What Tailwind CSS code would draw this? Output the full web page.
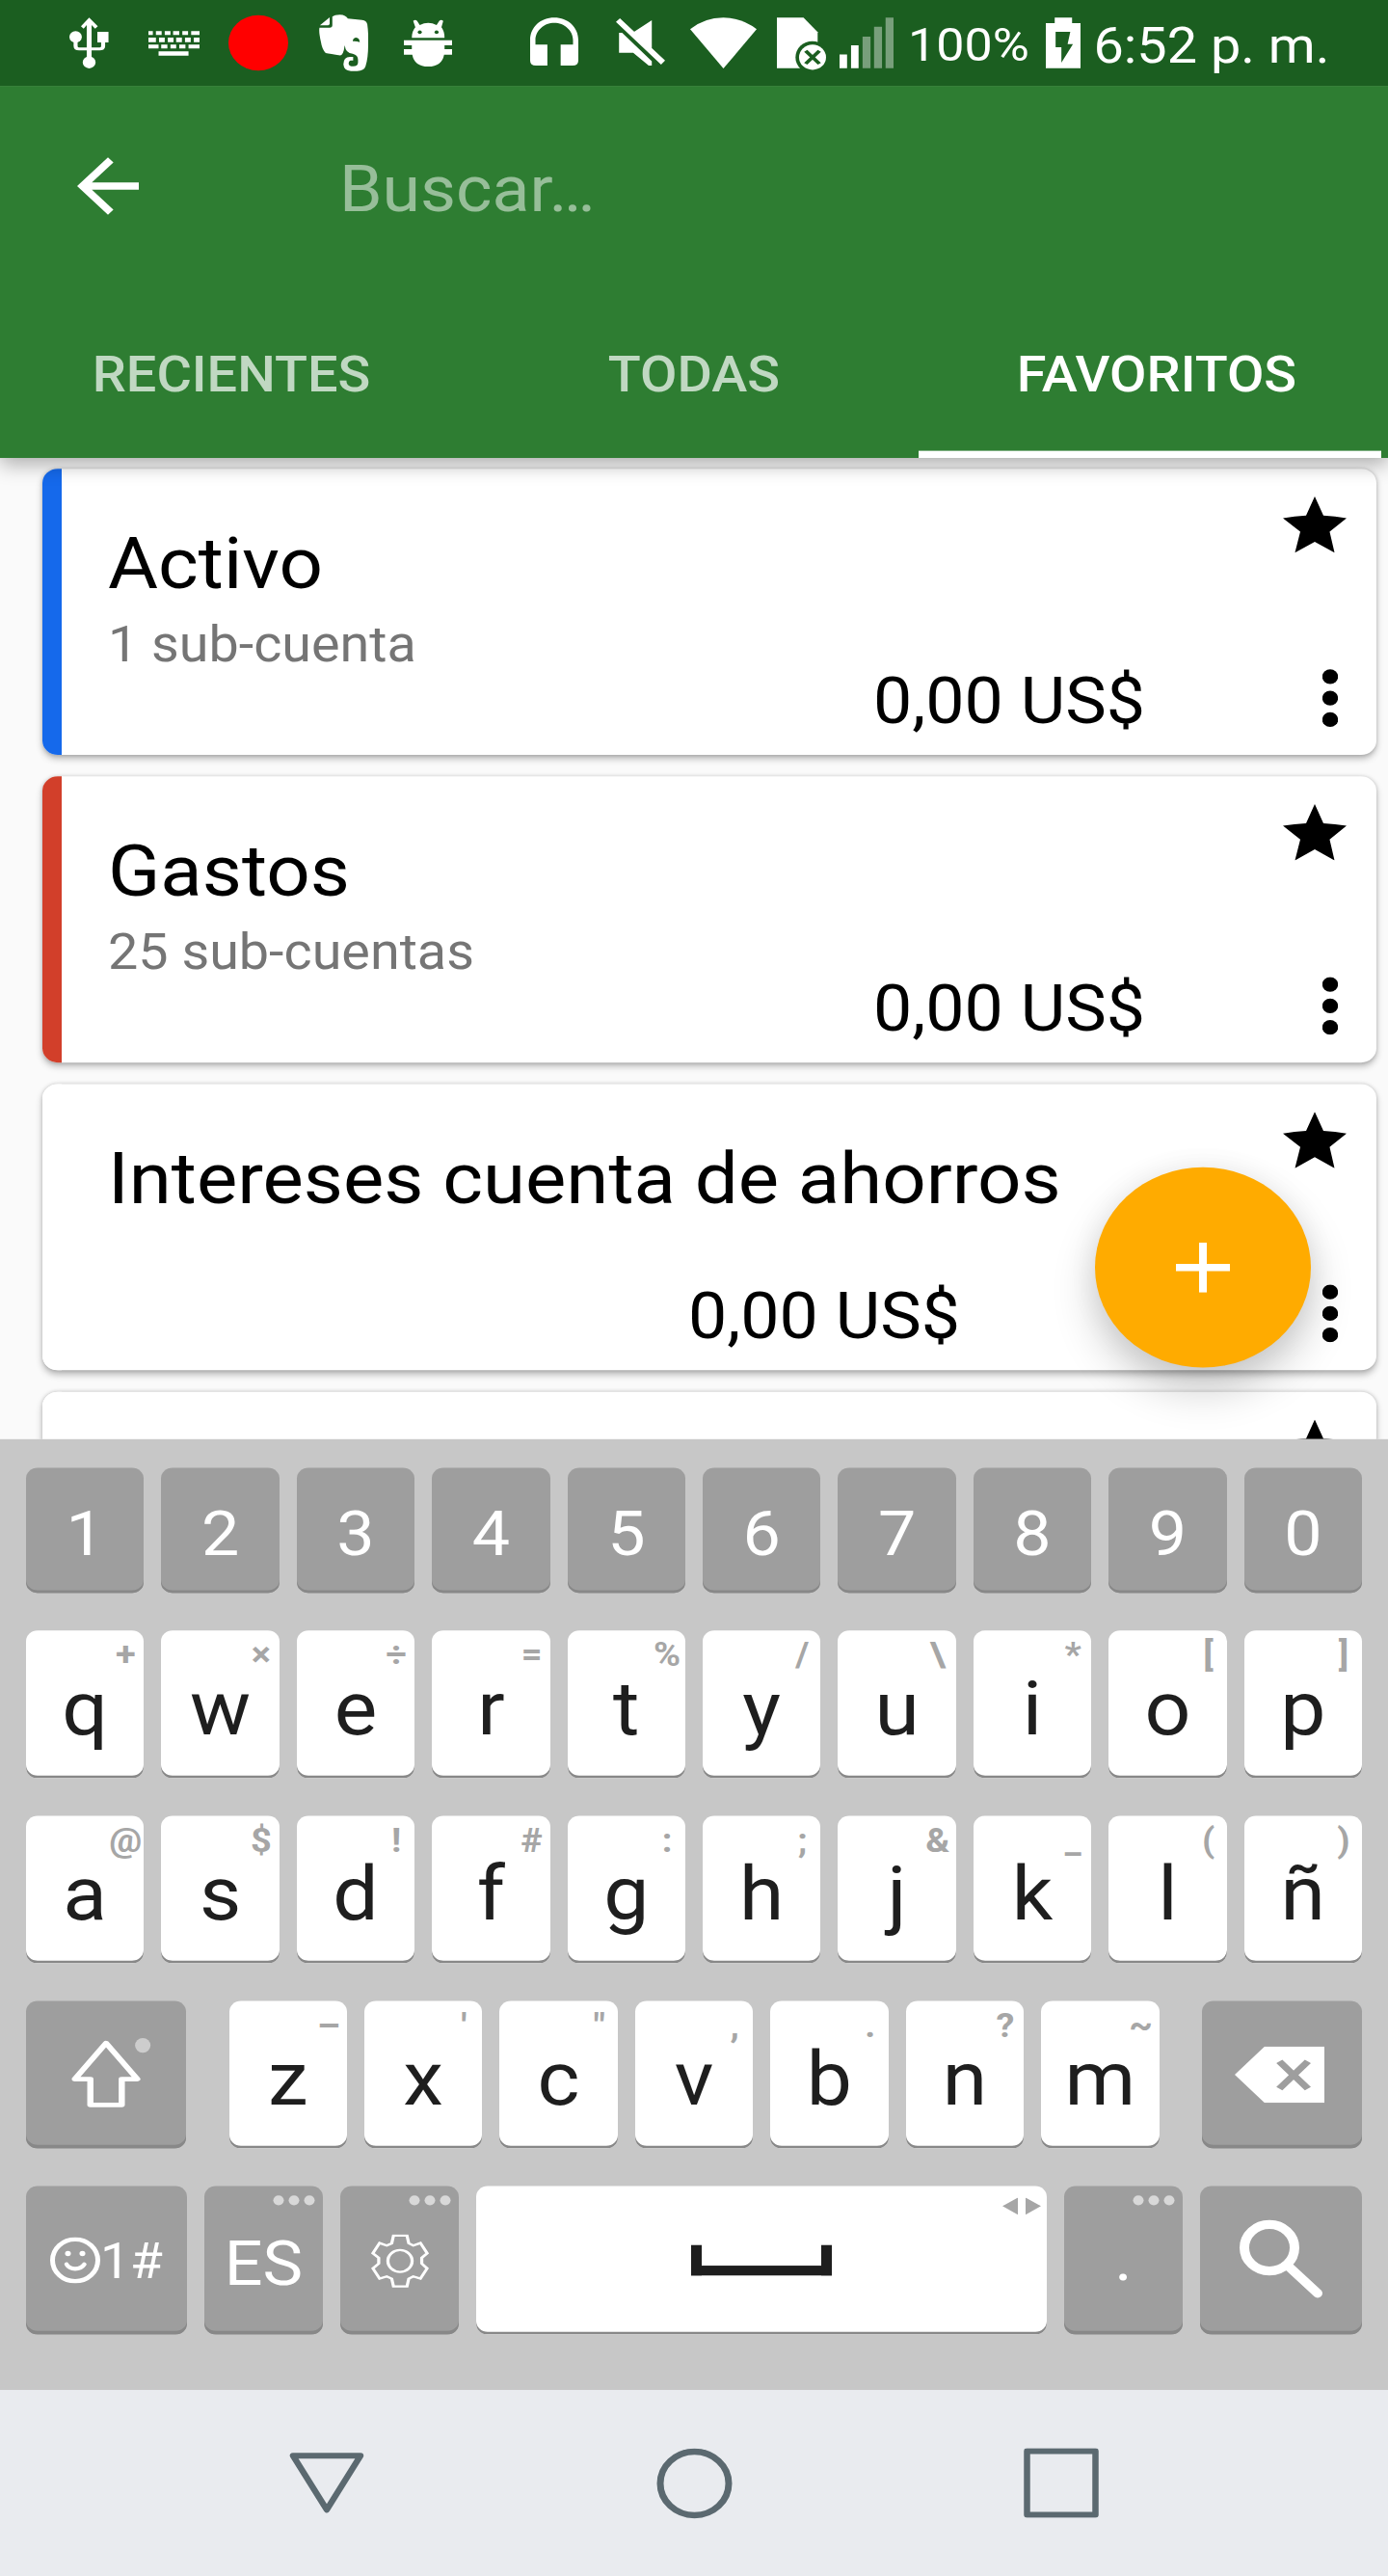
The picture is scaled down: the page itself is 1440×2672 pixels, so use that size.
<!DOCTYPE html>
<html lang="es">
<head>
<meta charset="utf-8">
<title>Cuentas favoritas</title>
<script src="https://cdn.jsdelivr.net/npm/@tailwindcss/browser@4"></script>
</head>
<body class="bg-[#fafafa]">
<div class="h-[2672px] w-[1440px] overflow-hidden">
<div class="relative flex h-[2880px] w-[1440px] origin-top scale-y-[0.92778] flex-col overflow-hidden bg-[#fafafa] font-['Roboto',sans-serif]">

  <!-- Status bar -->
  <div class="relative z-20 flex h-24 shrink-0 bg-[#1b5e20] text-white">
    <svg class="ml-[72px] h-24 w-[41px]" viewBox="157 0 89 267" preserveAspectRatio="none" fill="#fff">
      <ellipse cx="171" cy="115" rx="14" ry="18"/><rect x="220" y="99" width="25" height="33"/>
      <path d="M201.500 55L221 82L215 89L207 78V180H196V78L189 89L183 82Z"/>
      <path d="M171 125V143Q171 152 179 152H225Q233 152 233 143V125" fill="none" stroke="#fff" stroke-width="9"/>
      <ellipse cx="201.500" cy="194" rx="14.500" ry="18.500"/>
    </svg>
    <svg class="ml-[40.5px] h-24 w-[53px]" viewBox="334 0 116 267" preserveAspectRatio="none" fill="#fff">
      <path d="M334 97h10v12h-10zM351 97h13v12h-13zM371 97h13v12h-13zM390 97h14v12h-14zM411 97h13v12h-13zM431 97h19v12h-19zM334 117h17v14h-17zM358 117h13v14h-13zM378 117h13v14h-13zM397 117h13v14h-13zM417 117h13v14h-13zM437 117h13v14h-13zM334 139h23v12h-23zM363 139h14v12h-14zM384 139h13v12h-13zM404 139h14v12h-14zM425 139h25v12h-25zM357 160h68v13h-68z"/>
    </svg>
    <div class="mt-[17px] ml-[30.5px] size-[62px] rounded-full bg-[#ff0000]"></div>
    <svg class="ml-[31.5px] h-24 w-[51px]" viewBox="720 0 111 267" preserveAspectRatio="none" fill="#fff">
      <path d="M722 79L744 54V73Q744 79 738 79Z"/>
      <path fill-rule="evenodd" d="M750 52Q755 46 767 46Q781 47 785 58L817 62Q828 64 829 76Q832 105 831 140Q831 180 825 206Q822 220 806 221H792Q776 219 775 200Q775 178 790 177H797V188H791Q786 190 787 199Q788 206 797 206Q808 206 808 194V186Q808 171 796 167Q780 166 778 141Q775 172 768 172Q745 168 735 165Q727 155 724 129Q719 98 721 86H744Q750 86 750 79ZM796 128Q797 117 804 117Q811 118 812 131Q804 127 796 128Z"/>
    </svg>
    <svg class="ml-[37px] h-24 w-[50px]" viewBox="912 0 109 267" preserveAspectRatio="none" fill="#fff">
      <path d="M933 65Q938 59 942 65L948 78Q967 64 986 78L992 65Q996 59 1001 65L997 85Q1004 97 1004 118H930Q930 97 938 85Z"/>
      <ellipse cx="948" cy="100" rx="4.500" ry="5.500" fill="#1b5e20"/><ellipse cx="986" cy="100" rx="4.500" ry="5.500" fill="#1b5e20"/>
      <path d="M912 125H1021V141H1004V153H1021V170H1003Q998 207 967 207Q936 207 931 170H912V153H930V141H912Z"/>
    </svg>
    <svg class="ml-[81px] h-24 w-[50px]" viewBox="1198 0 109 267" preserveAspectRatio="none" fill="#fff">
      <path d="M1198 125C1198 84 1222 55 1252.500 55S1307 84 1307 125V188Q1307 204 1294 204H1267V139H1295V125C1295 94 1275 71 1252.500 71S1210 94 1210 125V139H1237V204H1211Q1198 204 1198 188Z"/>
    </svg>
    <svg class="ml-[39.5px] h-24 w-[51px]" viewBox="1393 0 111 267" preserveAspectRatio="none" fill="#fff">
      <path d="M1402 57L1504 188L1495 201L1393 68ZM1474 63V151L1434 99ZM1400 102H1407L1474 190V204H1467L1432 164H1400Z"/>
    </svg>
    <svg class="ml-[26px] h-24 w-[69px]" viewBox="-7.500 0 150 267" preserveAspectRatio="none" fill="#fff">
      <path d="M67.500 213L-7.500 91Q25 55 67.500 55T142.500 91Z"/>
    </svg>
    <svg class="ml-[20.5px] h-24 w-[51px]" viewBox="187 0 111 267" preserveAspectRatio="none">
      <path d="M187 55H247L279 100V212H187Z" fill="#fff"/>
      <ellipse cx="267" cy="178" rx="38" ry="50" fill="#1b5e20"/><ellipse cx="267.500" cy="178" rx="30.500" ry="39" fill="#fff"/>
      <path d="M252 158L283 198M283 158L252 198" stroke="#1b5e20" stroke-width="9"/>
    </svg>
    <svg class="ml-[14px] h-24 w-[56px]" viewBox="329 0 122 267" preserveAspectRatio="none" fill="#fff">
      <path d="M329 169h17v43h-17zM355 141h17v71h-17z"/><path fill="#789f7b" d="M381 114h18v98h-18zM407 83h18v129h-18zM433 55h18v157h-18z"/>
    </svg>
    <span class="mt-[3px] ml-[15.5px] w-[128px] text-[52px] leading-[96px] whitespace-nowrap">100%</span>
    <svg class="ml-[15px] h-24 w-[36px]" viewBox="797 0 78 267" preserveAspectRatio="none">
      <path fill="#fff" fill-rule="evenodd" d="M817 55H856V72H875V212H797V72H817ZM819 99V147H832V195L858 137H846L852 99Z"/>
    </svg>
    <span class="mt-[3px] ml-[13.5px] text-[55.8px] leading-[96px] whitespace-nowrap">6:52 p. m.</span>
  </div>

  <!-- Search toolbar and tabs -->
  <div class="relative z-10 flex h-[416px] shrink-0 flex-col bg-[#2e7d32] shadow-[0_8px_20px_rgba(0,0,0,0.3)]">
    <div class="flex h-56 items-center">
      <svg class="ml-16 size-24" viewBox="0 0 24 24" fill="#fff"><path d="M20 11H7.830l5.590-5.590L12 4l-8 8 8 8 1.410-1.410L7.830 13H20v-2z"/></svg>
      <span class="mt-[7px] ml-[192px] text-[71.6px] leading-[96px] text-white/50">Buscar…</span>
    </div>
    <div class="flex h-48 text-center text-[55.8px] leading-[196px] font-medium text-white/70">
      <span class="mt-[1px] flex-1">RECIENTES</span>
      <span class="mt-[1px] flex-1">TODAS</span>
      <span class="mt-[1px] flex-1 text-white">FAVORITOS</span>
    </div>
    <div class="absolute right-[7px] bottom-0 h-2 w-[480px] bg-white"></div>
  </div>

  <!-- Account list -->
  <div id="accounts" class="flex h-[1097px] shrink-0 flex-col gap-6 overflow-hidden pt-3 pr-3 pl-11"></div>

  <!-- Add button -->
  <button class="absolute top-[1305px] left-[1136px] flex size-56 items-center justify-center rounded-full bg-[#ffab00] shadow-[0_24px_48px_rgba(0,0,0,0.2),0_4px_32px_rgba(0,0,0,0.07)]">
    <svg class="size-14" viewBox="0 0 14 14" fill="#fff"><path d="M6 0h2v6h6v2H8v6H6V8H0V6h6z"/></svg>
  </button>

  <!-- Keyboard -->
  <div class="relative flex h-[1063px] shrink-0 flex-col gap-[42px] bg-[#c7c7c7] px-[27px] pt-8 text-[#1e1e1e]">
    <div id="digits" class="grid grid-cols-10 gap-[18px]"></div>
    <div id="row1" class="grid grid-cols-10 gap-[18px]"></div>
    <div id="row2" class="grid grid-cols-10 gap-[18px]"></div>
    <div class="flex justify-between">
      <div class="flex h-[165px] w-[166px] rounded-xl bg-[#9e9e9e] shadow-[inset_0_-4px_#888]">
        <svg class="mt-[40px] ml-[47px] h-[82px] w-[84px]" viewBox="161 189 183 228" preserveAspectRatio="none">
          <path d="M239.500 209L310 321H275V401H204V321H169Z" fill="none" stroke="#fff" stroke-width="14" stroke-linejoin="round"/>
          <ellipse cx="322.500" cy="216" rx="17.500" ry="23" fill="#cdcdcd"/>
        </svg>
      </div>
      <div id="row3" class="grid w-[965px] grid-cols-7 gap-[18px]"></div>
      <div class="flex h-[165px] w-[166px] rounded-xl bg-[#9e9e9e] shadow-[inset_0_-4px_#888]">
        <svg class="mt-[51px] ml-[34px] h-[63px] w-[93px]" viewBox="1223 217 201 174" preserveAspectRatio="none">
          <path d="M1223 304L1290 217H1424V391H1290Z" fill="#fff"/><path d="M1323 263L1387 347M1387 263L1323 347" stroke="#9e9e9e" stroke-width="17"/>
        </svg>
      </div>
    </div>
    <div class="flex gap-[18px]">
      <div class="flex h-[166px] w-[167px] rounded-xl bg-[#9e9e9e] text-white shadow-[inset_0_-4px_#888]">
        <svg class="mt-[57px] ml-[25px] size-[52px]" viewBox="0 0 52 52" fill="none" stroke="#fff" stroke-linecap="round">
          <circle cx="26" cy="26" r="23.500" stroke-width="5"/><circle cx="18.500" cy="18.500" r="3" fill="#fff" stroke="none"/><circle cx="33.500" cy="18.500" r="3" fill="#fff" stroke="none"/>
          <path d="M17 30.500Q19.500 35.500 26 35.500T35.500 30.500" stroke-width="4.500"/>
        </svg>
        <span class="mt-[3px] text-[55px] leading-[162px]">1#</span>
      </div>
      <div class="relative h-[166px] w-[123px] rounded-xl bg-[#9e9e9e] text-center text-[70px] leading-[174px] text-white shadow-[inset_0_-4px_#888]">
        ES
        <svg class="absolute top-[10px] right-2 h-3 w-11" viewBox="0 0 44 12" fill="#d8d8d8"><circle cx="6" cy="6" r="5.500"/><circle cx="22" cy="6" r="5.500"/><circle cx="38" cy="6" r="5.500"/></svg>
      </div>
      <div class="relative flex h-[166px] w-[123px] items-center justify-center rounded-xl bg-[#9e9e9e] shadow-[inset_0_-4px_#888]">
        <svg class="mt-[1px] h-[60px] w-[60px]" viewBox="838 802 129 167" preserveAspectRatio="none" fill="none" stroke="#fff" stroke-width="7">
          <path d="M888 806H918L922 830L932 837L948 829L963 861L951 875V893L963 908L948 940L932 933L922 940L918 964H888L884 940L873 933L857 940L842 908L855 893V875L842 861L857 829L873 837L884 830Z"/>
          <ellipse cx="902.500" cy="885" rx="27" ry="34"/>
        </svg>
        <svg class="absolute top-[10px] right-2 h-3 w-11" viewBox="0 0 44 12" fill="#d8d8d8"><circle cx="6" cy="6" r="5.500"/><circle cx="22" cy="6" r="5.500"/><circle cx="38" cy="6" r="5.500"/></svg>
      </div>
      <div class="relative flex h-[166px] w-[592px] justify-center rounded-xl bg-white pt-[66px] shadow-[inset_0_-3px_#888]">
        <div class="h-[34px] w-[146px] border-x-[11px] border-b-[11px] border-[#1e1e1e]"></div>
        <svg class="absolute top-[13px] right-[6px] h-[19px] w-10" viewBox="0 0 40 19" fill="#a6a6a6"><path d="M16 0V19L0 9.500ZM24 0V19L40 9.500Z"/></svg>
      </div>
      <div class="relative h-[166px] w-[123px] rounded-xl bg-[#9e9e9e] text-center text-[70px] leading-[162px] text-white shadow-[inset_0_-4px_#888]">
        <span>.</span>
        <svg class="absolute top-[10px] right-2 h-3 w-11" viewBox="0 0 44 12" fill="#d8d8d8"><circle cx="6" cy="6" r="5.500"/><circle cx="22" cy="6" r="5.500"/><circle cx="38" cy="6" r="5.500"/></svg>
      </div>
      <div class="flex h-[166px] w-[168px] rounded-xl bg-[#9e9e9e] shadow-[inset_0_-4px_#888]">
        <svg class="mt-[37px] ml-[40px] size-[89px]" viewBox="0 0 89 89" fill="none" stroke="#fff" stroke-linecap="round">
          <circle cx="32" cy="32" r="26" stroke-width="10"/><path d="M52.500 53.500L82 83" stroke-width="10"/>
        </svg>
      </div>
    </div>
  </div>

  <!-- Navigation bar -->
  <div class="flex h-52 shrink-0 items-center justify-between bg-[#e9ebef] pr-[300px] pl-[300px]">
    <svg class="h-[80px] w-[78px]" viewBox="0 0 78 80" fill="none" stroke="#5b6970" stroke-width="6.500" stroke-linejoin="round"><path d="M4 9.500H74L39 70Z"/></svg>
    <svg class="size-[79px]" viewBox="0 0 79 79" fill="none" stroke="#5b6970" stroke-width="7"><circle cx="39.500" cy="39.500" r="35.500"/></svg>
    <svg class="size-[78px]" viewBox="0 0 78 78" fill="none" stroke="#5b6970" stroke-width="6.500" stroke-linejoin="round"><path d="M3.500 3.500H74.500V74.500H3.500Z"/></svg>
  </div>
</div>
</div>

<script>
const accounts = [
  { name: 'Activo', sub: '1 sub-cuenta', color: '#1569eb', pad: 120 },
  { name: 'Gastos', sub: '25 sub-cuentas', color: '#d23f2a', pad: 120 },
  { name: 'Intereses cuenta de ahorros', sub: '', color: '#ffffff', pad: 312 },
  { name: '', sub: '', color: '#ffffff', pad: 120, empty: true }
];
document.getElementById('accounts').innerHTML = accounts.map(a => `
  <div class="flex h-80 shrink-0 rounded-2xl bg-white shadow-[0_4px_8px_rgba(0,0,0,0.26),0_0_4px_rgba(0,0,0,0.14)]">
    <div class="w-5 rounded-l-2xl" style="background:${a.color}"></div>
    <div class="flex w-[1244px] flex-col pl-[48px]">
      <div class="h-[228px] pt-[58px]">
        <div class="h-24 text-[79.8px] leading-[96px] whitespace-nowrap text-black">${a.name}</div>
        <div class="mt-[10px] text-[55.7px] leading-[64px] text-[#757575]">${a.sub}</div>
      </div>
      <div class="text-right text-[71.7px] leading-[63px] text-black" style="padding-right:${a.pad}px">${a.empty ? '' : '0,00 US$'}</div>
    </div>
    <div class="w-[120px]">
      <svg class="mt-[31px] ml-[23px] h-[63px] w-[66px]" viewBox="1331 135 143 174" preserveAspectRatio="none"><path d="M1402.500 135L1422 194Q1448 196 1474 202L1436 244L1447 309L1402.500 275L1358 309L1370 244L1331 202Q1357 196 1383 194Z"/></svg>
      <svg class="mt-[130px] ml-[64px] h-[65px] w-4" viewBox="0 0 16 65"><circle cx="8" cy="8.500" r="8.200"/><circle cx="8" cy="32.500" r="8.200"/><circle cx="8" cy="56.500" r="8.200"/></svg>
    </div>
  </div>`).join('');

document.getElementById('digits').innerHTML = [...'1234567890'].map(d =>
  `<div class="h-[140px] rounded-xl bg-[#9e9e9e] text-center text-[70px] leading-[148px] text-white shadow-[inset_0_-3px_#888]">${d}</div>`).join('');

const row = (id, letters, hints) => {
  document.getElementById(id).innerHTML = [...letters].map((c, i) => `
    <div class="relative h-[165px] rounded-xl bg-white text-center text-[84px] leading-[175px] shadow-[inset_0_-3px_#888]">${c}<span class="absolute top-0 right-0 w-[38px] text-center text-[38px] leading-[54px] font-bold text-[#a6a6a6]">${hints[i]}</span></div>`).join('');
};
row('row1', 'qwertyuiop', ['+', '×', '÷', '=', '%', '/', '\\', '*', '[', ']']);
row('row2', 'asdfghjklñ', ['@', '$', '!', '#', ':', ';', '&amp;', '_', '(', ')']);
row('row3', 'zxcvbnm', ['–', "'", '"', ',', '.', '?', '~']);
</script>
</body>
</html>
